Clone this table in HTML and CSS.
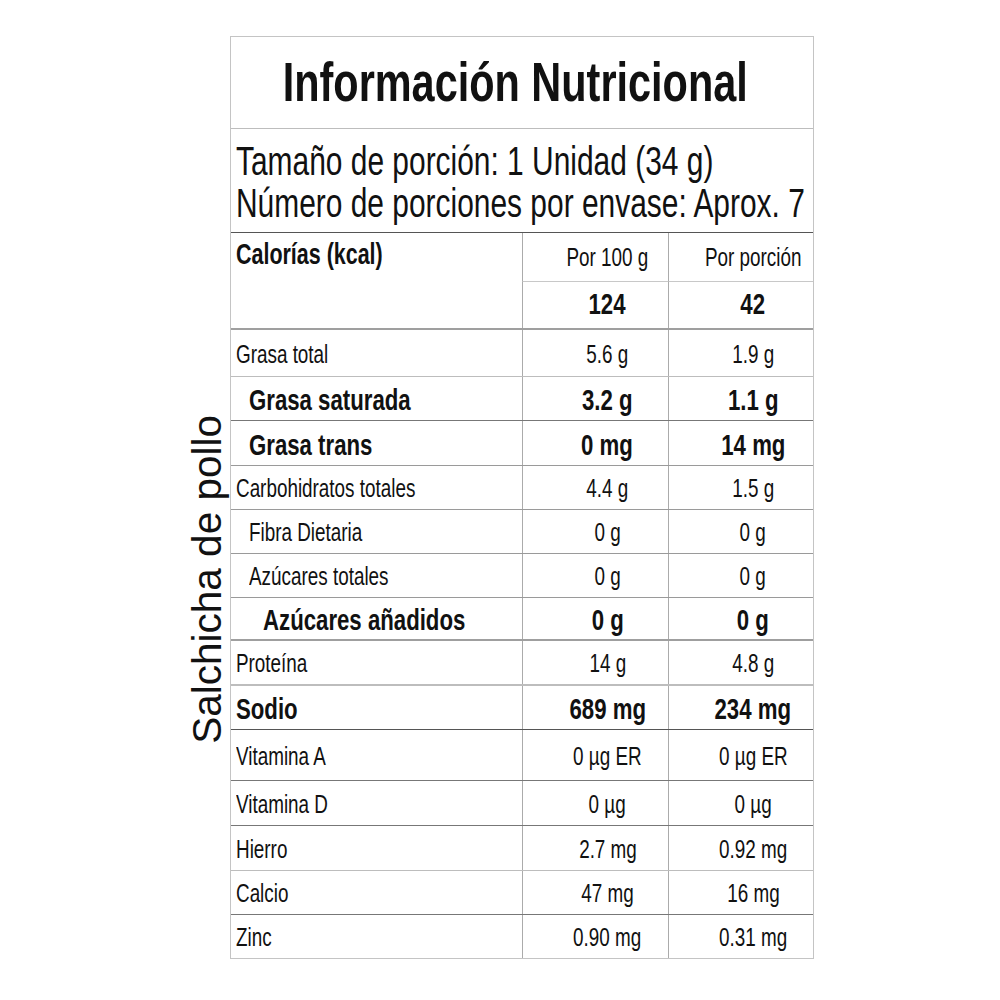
FILE: index.html
```html
<!DOCTYPE html>
<html lang="es">
<head>
<meta charset="utf-8">
<title>Información Nutricional</title>
<link rel="stylesheet" href="styles.css">
</head>
<body>
<div class="page">
  <div class="side">Salchicha de pollo</div>
  <div class="table">
    <div class="row full title h92 b-light">
      <span class="sx">Información Nutricional</span>
    </div>
    <div class="row full serving h104 b-dark">
      <span class="sx">Tamaño de porción: 1 Unidad (34 g)</span>
      <span class="sx">Número de porciones por envase: Aprox. 7</span>
    </div>
    <div class="row cal h97 b-thick">
      <div class="cell lab cal-lab bold"><span class="sx">Calorías (kcal)</span></div>
      <div class="cell val cal-top"><span class="sx">Por 100 g</span></div>
      <div class="cell val cal-top"><span class="sx">Por porción</span></div>
      <div class="cell val cal-bot bold"><span class="sx">124</span></div>
      <div class="cell val cal-bot bold"><span class="sx">42</span></div>
    </div>
    <div class="row h47 b-light">
      <div class="cell lab"><span class="sx">Grasa total</span></div>
      <div class="cell val"><span class="sx">5.6 g</span></div>
      <div class="cell val"><span class="sx">1.9 g</span></div>
    </div>
    <div class="row h44 b-dark2 bold">
      <div class="cell lab ind1"><span class="sx">Grasa saturada</span></div>
      <div class="cell val"><span class="sx">3.2 g</span></div>
      <div class="cell val"><span class="sx">1.1 g</span></div>
    </div>
    <div class="row h45 b-mid bold">
      <div class="cell lab ind1"><span class="sx">Grasa trans</span></div>
      <div class="cell val"><span class="sx">0 mg</span></div>
      <div class="cell val"><span class="sx">14 mg</span></div>
    </div>
    <div class="row h44 b-mid">
      <div class="cell lab"><span class="sx">Carbohidratos totales</span></div>
      <div class="cell val"><span class="sx">4.4 g</span></div>
      <div class="cell val"><span class="sx">1.5 g</span></div>
    </div>
    <div class="row h44 b-mid">
      <div class="cell lab ind1"><span class="sx">Fibra Dietaria</span></div>
      <div class="cell val"><span class="sx">0 g</span></div>
      <div class="cell val"><span class="sx">0 g</span></div>
    </div>
    <div class="row h44 b-mid">
      <div class="cell lab ind1"><span class="sx">Azúcares totales</span></div>
      <div class="cell val"><span class="sx">0 g</span></div>
      <div class="cell val"><span class="sx">0 g</span></div>
    </div>
    <div class="row h43 b-thick bold">
      <div class="cell lab ind2"><span class="sx">Azúcares añadidos</span></div>
      <div class="cell val"><span class="sx">0 g</span></div>
      <div class="cell val"><span class="sx">0 g</span></div>
    </div>
    <div class="row h45 b-light2">
      <div class="cell lab"><span class="sx">Proteína</span></div>
      <div class="cell val"><span class="sx">14 g</span></div>
      <div class="cell val"><span class="sx">4.8 g</span></div>
    </div>
    <div class="row h44 b-dark bold">
      <div class="cell lab"><span class="sx">Sodio</span></div>
      <div class="cell val"><span class="sx">689 mg</span></div>
      <div class="cell val"><span class="sx">234 mg</span></div>
    </div>
    <div class="row h51 b-dark2">
      <div class="cell lab"><span class="sx">Vitamina A</span></div>
      <div class="cell val"><span class="sx">0 µg ER</span></div>
      <div class="cell val"><span class="sx">0 µg ER</span></div>
    </div>
    <div class="row h45 b-dark2">
      <div class="cell lab"><span class="sx">Vitamina D</span></div>
      <div class="cell val"><span class="sx">0 µg</span></div>
      <div class="cell val"><span class="sx">0 µg</span></div>
    </div>
    <div class="row h45 b-light">
      <div class="cell lab"><span class="sx">Hierro</span></div>
      <div class="cell val"><span class="sx">2.7 mg</span></div>
      <div class="cell val"><span class="sx">0.92 mg</span></div>
    </div>
    <div class="row h44 b-dark2">
      <div class="cell lab"><span class="sx">Calcio</span></div>
      <div class="cell val"><span class="sx">47 mg</span></div>
      <div class="cell val"><span class="sx">16 mg</span></div>
    </div>
    <div class="row h43 last">
      <div class="cell lab"><span class="sx">Zinc</span></div>
      <div class="cell val"><span class="sx">0.90 mg</span></div>
      <div class="cell val"><span class="sx">0.31 mg</span></div>
    </div>
  </div>
</div>
</body>
</html>
```

FILE: styles.css
```css
* {
  box-sizing: border-box;
}

body {
  margin: 0;
  background: #ffffff;
  color: #111111;
  font-family: "Liberation Sans", Arial, sans-serif;
}

.page {
  display: flex;
  align-items: flex-start;
  padding: 36px 0 0 187px;
}

.side {
  writing-mode: vertical-rl;
  transform: rotate(180deg);
  font-size: 40.5px;
  line-height: 40px;
  white-space: nowrap;
  margin-top: 379px;
  margin-right: 3px;
}

.table {
  width: 584px;
  border: 1px solid #c4c4c4;
}

.row {
  display: grid;
  grid-template-columns: 291px 146px 145px;
  border-bottom: 1px solid #999999;
  font-size: 25.5px;
  line-height: 1;
}

.row.last {
  border-bottom: none;
}

.row.full {
  display: flex;
}

.title {
  justify-content: center;
  align-items: center;
  padding: 0 14px 2px 0;
  font-size: 56px;
  font-weight: bold;
}

.serving {
  flex-direction: column;
  align-items: flex-start;
  padding: 11px 0 0 5px;
  font-size: 40px;
  line-height: 42px;
}

.serving .sx {
  transform: scaleX(0.748);
}

.h43 { height: 43px; }
.h44 { height: 44px; }
.h45 { height: 45px; }
.h47 { height: 47px; }
.h51 { height: 51px; }
.h92 { height: 92px; }
.h97 { height: 97px; }
.h104 { height: 104px; }

.b-light { border-bottom-color: #bdbdbd; }
.b-light2 { border-bottom: 2px solid #bdbdbd; }
.b-mid { border-bottom-color: #9a9a9a; }
.b-dark { border-bottom-color: #555555; }
.b-dark2 { border-bottom-color: #777777; }
.b-thick { border-bottom: 2px solid #9f9f9f; }

.cell {
  display: flex;
  align-items: center;
  padding-top: 3px;
}

.lab {
  padding-left: 5px;
}

.lab.ind1 {
  padding-left: 18px;
}

.lab.ind2 {
  padding-left: 32px;
}

.val {
  justify-content: center;
  padding-left: 24px;
  border-left: 1px solid #ababab;
}

.bold {
  font-weight: bold;
  font-size: 30px;
}

.sx {
  display: inline-block;
  white-space: nowrap;
  transform: scaleX(0.74);
  transform-origin: left center;
}

.val .sx,
.title .sx {
  transform-origin: center center;
}

.cal {
  grid-template-rows: 49px 1fr;
}

.cal-lab {
  grid-row: 1 / 3;
  align-items: flex-start;
  padding-top: 7px;
  font-size: 29px;
}

.cal-top {
  grid-row: 1;
  border-bottom: 1px solid #c8c8c8;
  padding-top: 2px;
}

.cal-bot {
  grid-row: 2;
  padding-top: 0;
  padding-bottom: 2px;
}
```
